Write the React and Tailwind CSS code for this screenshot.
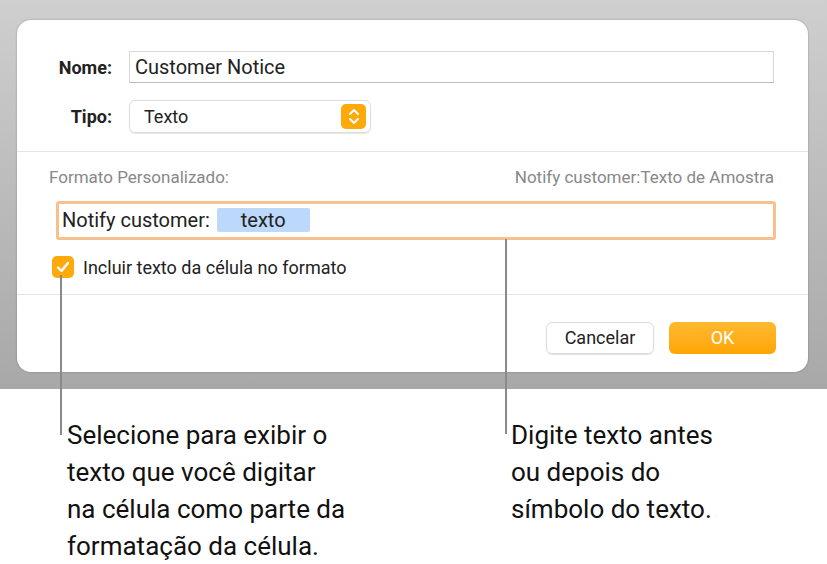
import React from "react";

const font = { fontFamily: "Roboto, 'Liberation Sans', sans-serif" };

export default function App() {
  return (
    <div className="relative w-[827px] h-[564px] bg-white overflow-hidden" style={font}>
      {/* Backdrop with dialog */}
      <div className="h-[389px] pt-[20px] pl-[17px] bg-gradient-to-b from-[#cfcfcf] to-[#a8a8a8]">
        <div className="w-[791px] h-[352px] bg-white rounded-[14px] shadow-[0_0_2px_rgba(0,0,0,0.3)]">
          <div className="flex items-center h-[32px] pt-[31px] box-content">
            <div className="w-[95px] text-right text-[18px] font-bold text-[#222]">Nome:</div>
            <div className="ml-[17px] w-[645px] h-[32px] border border-[#d8d8d8] border-b-[#bbb] flex items-center px-[5px] text-[20px] text-[#222]">
              Customer Notice
            </div>
          </div>
          <div className="flex items-center mt-[17px]">
            <div className="w-[95px] text-right text-[18px] font-bold text-[#222]">Tipo:</div>
            <div className="ml-[17px] w-[242px] h-[33px] rounded-[6px] border border-[#ddd] shadow-[0_1px_1px_rgba(0,0,0,0.1)] flex items-center justify-between pl-[14px] pr-[4px] text-[18px] text-[#222]">
              Texto
              <div className="w-[25px] h-[25px] rounded-[5px] bg-[#ffa90a] flex items-center justify-center">
                <svg width="12" height="17" viewBox="0 0 12 17" fill="none" stroke="white" strokeWidth="2" strokeLinecap="round" strokeLinejoin="round">
                  <path d="M2 6 L6 2 L10 6" />
                  <path d="M2 11 L6 15 L10 11" />
                </svg>
              </div>
            </div>
          </div>
          <div className="mt-[18px] border-t border-[#e4e4e4]" />
          <div className="flex justify-between pl-[32px] pr-[34px] mt-[13px] text-[17px] text-[#888]">
            <span>Formato Personalizado:</span>
            <span>Notify customer:Texto de Amostra</span>
          </div>
          <div className="ml-[39px] mr-[32px] mt-[10px] h-[39px] border-[3px] border-[#f8c08e] rounded-[3px] flex items-center px-[3px] text-[20px] text-[#222]">
            Notify customer:
            <span className="ml-[7px] bg-[#bcd8fb] rounded-[2px] px-[24px] leading-[24px]">texto</span>
          </div>
          <div className="flex items-center ml-[35px] mt-[14px] gap-[9px] text-[18px] text-[#222]">
            <div className="w-[22px] h-[22px] rounded-[5px] bg-[#ffa90a] flex items-center justify-center">
              <svg width="14" height="12" viewBox="0 0 14 12" fill="none" stroke="white" strokeWidth="2.4" strokeLinecap="round" strokeLinejoin="round">
                <path d="M2 6.5 L5.5 10 L12 2" />
              </svg>
            </div>
            Incluir texto da célula no formato
          </div>
          <div className="mt-[13px] border-t border-[#e4e4e4]" />
          <div className="flex justify-end gap-[15px] mr-[32px] mt-[27px]">
            <div className="w-[108px] h-[32px] rounded-[6px] border border-[#ddd] shadow-[0_1px_1px_rgba(0,0,0,0.12)] flex items-center justify-center text-[18px] text-[#222]">Cancelar</div>
            <div className="w-[107px] h-[32px] rounded-[6px] bg-gradient-to-b from-[#ffb92e] to-[#ffa500] flex items-center justify-center text-[18px] text-white">OK</div>
          </div>
        </div>
      </div>

      {/* Callout lines */}
      <div className="absolute left-[60px] top-[275px] w-[2px] h-[160px] bg-[#8a8a8a]" />
      <div className="absolute left-[505px] top-[239px] w-[2px] h-[195px] bg-[#8a8a8a]" />

      {/* Callout texts */}
      <div className="flex mt-[28px] text-[26px] leading-[37px] text-[#111]">
        <p className="ml-[67px] w-[330px]">Selecione para exibir o<br />texto que você digitar<br />na célula como parte da<br />formatação da célula.</p>
        <p className="ml-[114px] w-[280px]">Digite texto antes<br />ou depois do<br />símbolo do texto.</p>
      </div>
    </div>
  );
}
